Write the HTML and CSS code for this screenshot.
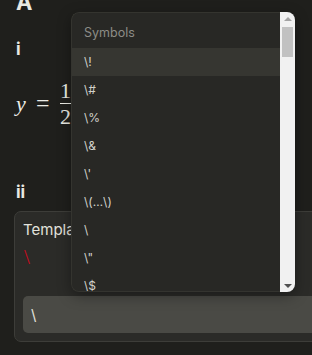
FILE: index.html
```html
<!DOCTYPE html>
<html lang="en">
<head>
    <meta charset="UTF-8">
    <meta name="viewport" content="width=device-width, initial-scale=1.0">
    <title>Question</title>
    <link rel="stylesheet" href="styles.css">
</head>
<body>
    <div class="page">
        <h2 class="part">A</h2>
        <div class="sub">i</div>
        <div class="math">
            <span class="var">y</span>
            <span class="op">=</span>
            <span class="frac">
                <span class="num">1</span>
                <span class="bar"></span>
                <span class="den">2</span>
            </span>
        </div>
        <div class="sub sub-ii">ii</div>
        <div class="card">
            <div class="label">Template</div>
            <div class="preview">\</div>
            <div class="input">\</div>
        </div>
    </div>

    <div class="menu">
        <div class="menu-body">
            <div class="menu-title">Symbols</div>
            <ul class="menu-list">
                <li class="active">\!</li>
                <li>\#</li>
                <li>\%</li>
                <li>\&amp;</li>
                <li>\'</li>
                <li>\(…\)</li>
                <li>\ </li>
                <li>\"</li>
                <li>\$</li>
                <li>\*</li>
                <li>\+</li>
            </ul>
        </div>
        <div class="scrollbar">
            <div class="sb-btn sb-up"></div>
            <div class="sb-track"><div class="sb-thumb"></div></div>
            <div class="sb-btn sb-down"></div>
        </div>
    </div>
</body>
</html>
```

FILE: styles.css
```css
* {
    box-sizing: border-box;
}
body {
    margin: 0;
    height: 355px;
    overflow: hidden;
    position: relative;
    background: #1f1f1c;
    color: #e8e8e2;
    font-family: Inter, "Noto Sans", sans-serif;
}
.page {
    padding: 0 16px;
    margin-top: -11px;
}
.part {
    margin: 0;
    font-size: 22px;
    line-height: 26px;
    font-weight: 700;
}
.sub {
    margin-top: 24px;
    font-size: 17px;
    line-height: 20px;
    font-weight: 700;
}
.sub-ii {
    margin-top: 53px;
}
.math {
    margin-top: 19px;
    display: flex;
    align-items: center;
    font-family: "Liberation Serif", "DejaVu Serif", serif;
    font-size: 22px;
    color: #ecece6;
}
.var {
    font-style: italic;
    width: 14px;
}
.op {
    margin: 0 10px 0 6px;
    font-size: 24px;
}
.frac {
    display: flex;
    flex-direction: column;
    align-items: center;
    width: 12px;
}
.num, .den {
    line-height: 25px;
}
.bar {
    width: 100%;
    height: 1px;
    background: #ecece6;
}
.card {
    margin: 9px 0 0 -2px;
    width: 330px;
    background: #2b2b28;
    border: 1px solid #3d3d39;
    border-radius: 7px;
    padding: 8px;
}
.label {
    font-size: 15px;
    line-height: 20px;
    color: #e2e2dc;
}
.preview {
    margin-top: 4px;
    font-family: "Liberation Serif", serif;
    font-size: 21px;
    line-height: 26px;
    color: #cc0a1e;
    padding-left: 1px;
}
.input {
    margin-top: 26px;
    height: 37px;
    line-height: 37px;
    background: #4a4a45;
    border-radius: 5px;
    padding: 0 8px;
    font-size: 15px;
    color: #e2e2dc;
}
.menu {
    position: absolute;
    left: 71px;
    top: 12px;
    width: 224px;
    height: 280px;
    display: flex;
    overflow: hidden;
    border-radius: 8px;
    box-shadow: 0 4px 14px rgba(0, 0, 0, 0.35);
    font-size: 12px;
}
.menu-body {
    flex: 1;
    overflow: hidden;
    background: #282825;
    border: 1px solid #34342f;
    border-right: none;
    border-radius: 8px 0 0 8px;
}
.menu-title {
    padding: 5px 12px 0;
    line-height: 30px;
    color: #8c8c86;
    font-size: 12.5px;
}
.menu-list {
    list-style: none;
    margin: 0;
    padding: 0;
}
.menu-list li {
    height: 28px;
    line-height: 28px;
    padding-left: 12px;
    color: #d2d2cb;
    white-space: pre;
}
.menu-list .active {
    background: #363631;
}
.scrollbar {
    width: 15px;
    display: flex;
    flex-direction: column;
    background: #f1f1f1;
}
.sb-btn {
    height: 15px;
    display: flex;
    align-items: center;
    justify-content: center;
}
.sb-btn::before {
    content: "";
    border-left: 4px solid transparent;
    border-right: 4px solid transparent;
}
.sb-up::before {
    border-bottom: 4px solid #a3a3a3;
    margin-bottom: 2px;
}
.sb-down::before {
    border-top: 4px solid #505050;
    margin-top: 2px;
}
.sb-track {
    flex: 1;
    padding: 0 2px;
}
.sb-thumb {
    height: 30px;
    background: #c1c1c1;
}
```
